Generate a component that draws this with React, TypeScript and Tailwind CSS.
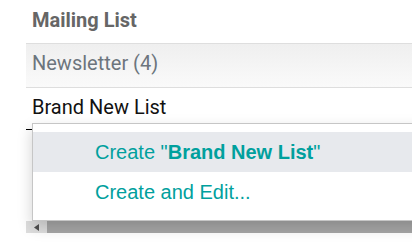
const App = () => {
  return (
    <div className="relative h-[244px] w-[412px] overflow-hidden bg-white font-['Roboto',sans-serif]">
      <div className="pl-[26px]">
        <div className="h-[44px] border-b border-[#dedede] pl-[6px] pt-[8px] text-[20px] font-bold leading-[24px] text-[#666666]">
          Mailing List
        </div>
        <div className="h-[44px] border-b border-[#dedede] bg-gradient-to-b from-[#efefef] to-[#fafafa] pl-[6px] pt-[7px] text-[20px] leading-[24px] text-[#6c757d]">
          Newsletter (4)
        </div>
        <div className="h-[42px] border-b border-black pl-[6px] pt-[7px] text-[20px] leading-[24px] text-[#111111]">
          Brand New List
        </div>
        <div className="mt-[91px] flex h-[12px]">
          <div className="flex w-[21px] items-center bg-[#dedede] pl-[8px]">
            <svg width="5" height="7" viewBox="0 0 5 7">
              <path d="M5 0 L0 3.5 L5 7 Z" fill="#505050" />
            </svg>
          </div>
          <div className="flex-1 bg-[#a7a7a7]" />
        </div>
      </div>

      <div className="absolute left-[32px] top-[123px] w-[420px] border border-[#c6c6c6] bg-white py-[8px] font-['Liberation_Sans',Arial,sans-serif] text-[20px] leading-[24px] text-[#00a09d] shadow-[0_6px_14px_rgba(0,0,0,0.18)]">
        <div className="flex h-[40px] items-center bg-[#e7e9ed] pl-[62px]">
          Create "<span className="font-bold">Brand New List</span>"
        </div>
        <div className="flex h-[40px] items-center pl-[62px]">Create and Edit...</div>
      </div>
    </div>
  );
};

export default App;
